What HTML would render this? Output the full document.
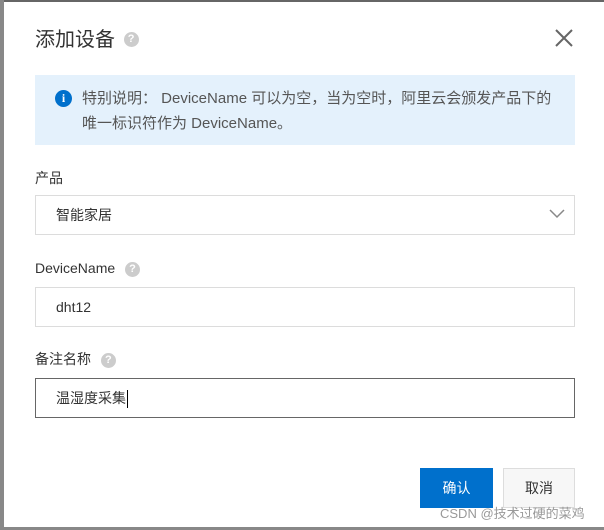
<!DOCTYPE html>
<html><head><meta charset="utf-8"><style>
*{margin:0;padding:0;box-sizing:border-box}
body{width:604px;height:530px;overflow:hidden;background:#fff;position:relative;font-family:"Liberation Sans","Noto Sans CJK SC",sans-serif;color:#333}
.a{position:absolute}
.q{display:inline-block;width:15px;height:15px;border-radius:50%;background:#ccc;color:#fff;font-size:11px;font-weight:bold;text-align:center;line-height:15px;vertical-align:middle}
.box{position:absolute;left:35px;width:540px;height:40px;border:1px solid #dcdcdc;font-size:14px;line-height:38px;padding-left:20px;color:#333}
</style></head><body>
<div class="a" style="left:0;top:0;width:604px;height:2px;background:#666"></div>
<div class="a" style="left:0;top:0;width:4px;height:530px;background:#888"></div>
<div class="a" style="left:0;bottom:0;width:604px;height:3px;background:#888"></div>
<div class="a" style="left:35px;top:27px;font-size:20px;color:#333;line-height:26px">添加设备 <span class="q" style="margin-left:3px;margin-top:-3px">?</span></div>
<svg class="a" style="left:555px;top:29px" width="18" height="18"><path d="M1 1L17 17M17 1L1 17" stroke="#666" stroke-width="2"/></svg>
<div class="a" style="left:35px;top:75px;width:540px;height:70px;background:#e4f1fc"></div>
<div class="a" style="left:55px;top:90px;width:17px;height:17px;border-radius:50%;background:#0070cc;color:#fff;font-size:12px;font-weight:bold;text-align:center;line-height:17px;font-family:'Liberation Serif',serif">i</div>
<div class="a" style="left:82px;top:86px;font-size:15px;line-height:25px;color:#555;width:490px;white-space:nowrap">特别说明： DeviceName 可以为空，当为空时，阿里云会颁发产品下的<br>唯一标识符作为 DeviceName。</div>
<div class="a" style="left:35px;top:168px;font-size:14px;line-height:20px">产品</div>
<div class="box" style="top:195px">智能家居</div>
<svg class="a" style="left:549px;top:209px" width="16" height="10"><path d="M1 1L8 8L15 1" stroke="#888" stroke-width="1.5" fill="none"/></svg>
<div class="a" style="left:35px;top:258px;font-size:14px;line-height:20px">DeviceName <span class="q" style="margin-left:6px">?</span></div>
<div class="box" style="top:287px">dht12</div>
<div class="a" style="left:35px;top:349px;font-size:14px;line-height:20px">备注名称 <span class="q" style="margin-left:6px">?</span></div>
<div class="box" style="top:378px;border-color:#666">温湿度采集<span style="display:inline-block;width:1px;height:18px;background:#000;vertical-align:middle;margin-left:1px"></span></div>
<div class="a" style="left:420px;top:468px;width:73px;height:40px;background:#0070cc;color:#fff;font-size:14px;text-align:center;line-height:40px">确认</div>
<div class="a" style="left:503px;top:468px;width:72px;height:40px;background:#f7f7f7;border:1px solid #ddd;color:#333;font-size:14px;text-align:center;line-height:38px">取消</div>
<div class="a" style="left:440px;top:505px;font-size:13px;color:#999;line-height:18px">CSDN @技术过硬的菜鸡</div>
</body></html>
